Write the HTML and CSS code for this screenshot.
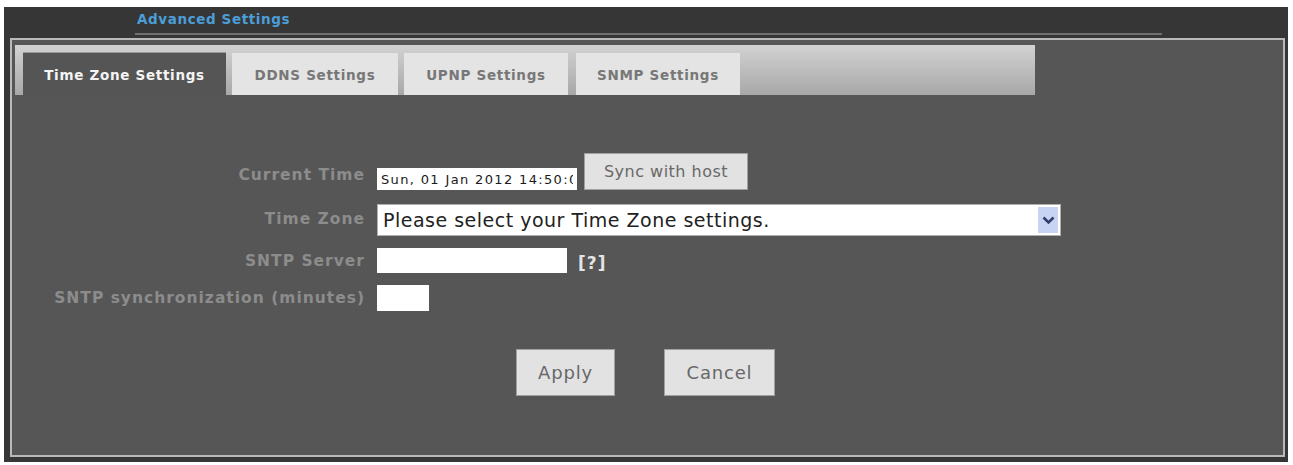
FILE: index.html
```html
<!DOCTYPE html>
<html lang="en">
<head>
  <meta charset="UTF-8" />
  <title>Advanced Settings</title>
  <link rel="stylesheet" href="styles.css">
</head>
<body>

  <div class="page">
    <div class="page-header">
      <h1 class="page-title">Advanced Settings</h1>
    </div>

    <div class="panel">
      <div class="tabbar">
        <div class="tab active">Time Zone Settings</div>
        <div class="tab tab-ddns">DDNS Settings</div>
        <div class="tab tab-upnp">UPNP Settings</div>
        <div class="tab tab-snmp">SNMP Settings</div>
      </div>

      <form class="settings-form" id="timeForm">
        <label class="field-label label-time" for="current_time">Current Time</label>
        <div class="field-row">
          <input type="text" id="current_time" class="input-time" value="Sun, 01 Jan 2012 14:50:00" readonly />
          <button type="button" class="btn btn-sync">Sync with host</button>
        </div>

        <label class="field-label" for="time_zone">Time Zone</label>
        <div class="select-wrap">
          <select id="time_zone" class="select-zone">
            <option>Please select your Time Zone settings.</option>
          </select>
          <span class="select-arrow">
            <svg width="13" height="9" viewBox="0 0 13 9"><path d="M1.5 1.5 L6.5 6.5 L11.5 1.5" fill="none" stroke="#34406b" stroke-width="2.6"/></svg>
          </span>
        </div>

        <label class="field-label" for="sntp_server">SNTP Server</label>
        <div class="field-row">
          <input type="text" id="sntp_server" class="input-server" />
          <span class="help">[?]</span>
        </div>

        <label class="field-label" for="sntp_minutes">SNTP synchronization (minutes)</label>
        <div class="field-row">
          <input type="text" id="sntp_minutes" class="input-minutes" />
        </div>

        <div class="actions">
          <button type="submit" class="btn btn-apply">Apply</button>
          <button type="reset" class="btn btn-cancel">Cancel</button>
        </div>
      </form>
    </div>
  </div>

</body>
</html>
```

FILE: styles.css
```css
body {
  margin: 0;
  background: #ffffff;
  font-family: 'DejaVu Sans', Verdana, Tahoma, sans-serif;
}

.page {
  margin: 7px 5px 0 4px;
  height: 455px;
  background: #363636;
  box-sizing: border-box;
  padding-top: 1px;
}

.page-header {
  margin-left: 131px;
  width: 1027px;
  height: 27px;
  padding-top: 3px;
  box-sizing: border-box;
  border-bottom: 2px solid #707070;
}

.page-title {
  margin: 0 0 0 2px;
  font-size: 13.5px;
  letter-spacing: 0.6px;
  font-weight: bold;
  color: #4b9ed8;
}

.panel {
  margin: 3px 3px 0 6px;
  height: 419px;
  box-sizing: border-box;
  border: 2px solid #b9b9b9;
  background: #565656;
}

.tabbar {
  display: flex;
  align-items: flex-end;
  margin: 5px 0 0 3px;
  width: 1020px;
  height: 50px;
  padding-left: 8px;
  box-sizing: border-box;
  background: linear-gradient(to bottom, #d2d2d2, #a8a8a8);
}

.tab {
  height: 42px;
  margin-right: 6px;
  padding-top: 2px;
  display: flex;
  align-items: center;
  justify-content: center;
  font-size: 13.5px;
  letter-spacing: 0.7px;
  font-weight: bold;
  color: #777777;
  background: #e4e4e4;
  box-sizing: border-box;
}

.tab.active {
  width: 203px;
  height: 43px;
  color: #f4f4f4;
  background: #555555;
  border-top: 1px solid #999999;
}

.tab-ddns { width: 166px; }
.tab-upnp { width: 164px; margin-right: 8px; }
.tab-snmp { width: 164px; }

.settings-form {
  display: grid;
  grid-template-columns: 353px 1fr;
  column-gap: 12px;
  row-gap: 12px;
  margin-top: 58px;
}

.field-label {
  text-align: right;
  align-self: center;
  font-size: 15.5px;
  letter-spacing: 1px;
  font-weight: bold;
  color: #8c8c8c;
}

.label-time {
  align-self: end;
  padding-bottom: 6px;
}

.field-row {
  display: flex;
  align-items: flex-end;
}

input[type="text"] {
  border: none;
  margin: 0;
  padding: 0 4px;
  background: #ffffff;
  font-family: inherit;
  box-sizing: border-box;
}

.input-time {
  width: 200px;
  height: 22px;
  font-size: 13px;
  letter-spacing: 1.35px;
  color: #1a1a1a;
}

.btn {
  margin: 0;
  border: 1px solid #a0a0a0;
  background: #e2e2e2;
  color: #686868;
  font-family: inherit;
  cursor: pointer;
}

.btn-sync {
  width: 164px;
  height: 37px;
  margin-left: 7px;
  font-size: 16px;
  letter-spacing: 0.5px;
}

.select-wrap {
  position: relative;
  width: 684px;
  height: 32px;
  margin-top: 2px;
}

.select-zone {
  width: 100%;
  height: 100%;
  margin: 0;
  border: 1px solid #b0b0b0;
  padding: 0 5px;
  background: #ffffff;
  font-family: inherit;
  font-size: 19px;
  letter-spacing: 0.5px;
  color: #222222;
  appearance: none;
}

.select-arrow {
  position: absolute;
  right: 3px;
  top: 3px;
  width: 20px;
  height: 26px;
  display: flex;
  align-items: center;
  justify-content: center;
  background: #c7d4f4;
  pointer-events: none;
}

.input-server {
  width: 190px;
  height: 25px;
}

.help {
  margin-left: 11px;
  font-size: 17px;
  letter-spacing: 1px;
  font-weight: bold;
  color: #e4e4e4;
  align-self: center;
  padding-top: 5px;
}

.input-minutes {
  width: 52px;
  height: 26px;
}

.actions {
  grid-column: 1 / -1;
  display: flex;
  justify-content: center;
  gap: 49px;
  margin-top: 26px;
  padding-right: 4px;
}

.btn-apply,
.btn-cancel {
  height: 47px;
  font-size: 18px;
  letter-spacing: 0.8px;
}

.btn-apply { width: 99px; }
.btn-cancel { width: 111px; }
```
